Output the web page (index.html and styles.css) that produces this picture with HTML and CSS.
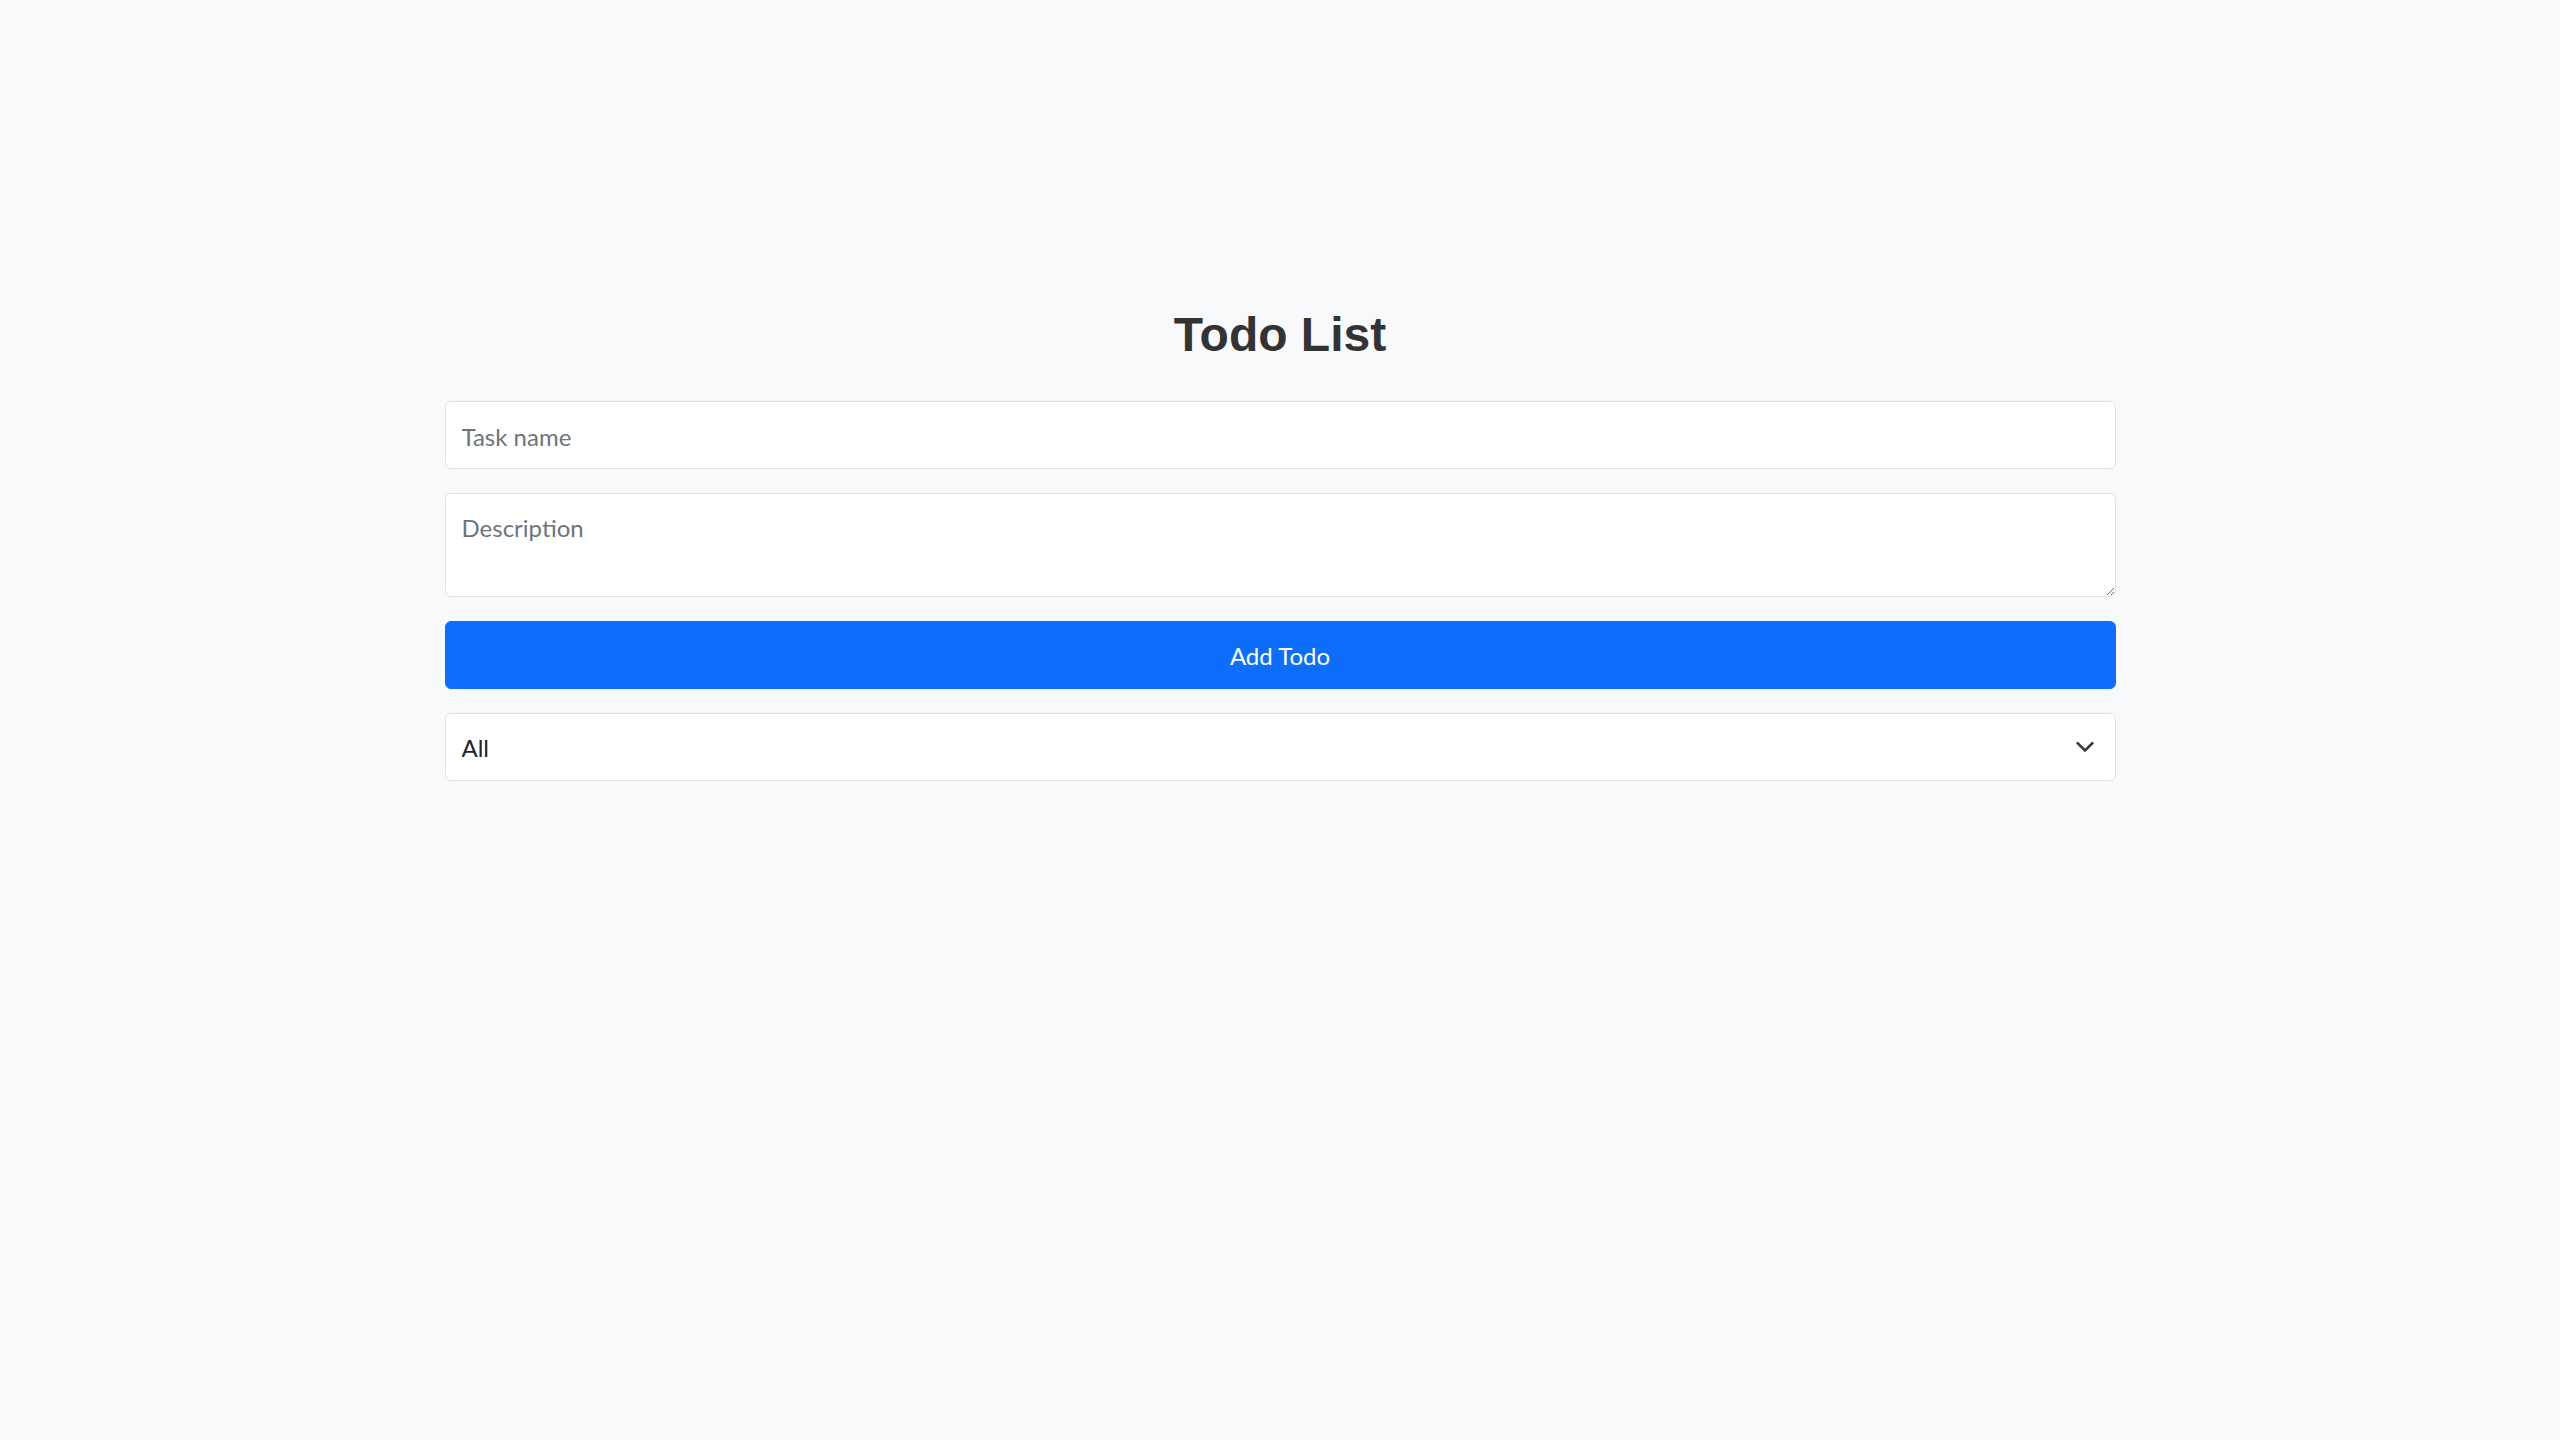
FILE: index.html
```html
<!DOCTYPE html>
<html lang="en">
<head>
<meta charset="utf-8">
<title>Todo List</title>
<link rel="stylesheet" href="styles.css">
</head>
<body>
<main class="app">
  <h1 class="title">Todo List</h1>
  <form class="todo-form">
    <input class="field" type="text" placeholder="Task name">
    <textarea class="field field-area" placeholder="Description"></textarea>
    <button class="btn-add" type="button">Add Todo</button>
    <div class="select-wrap">
      <select class="field field-select">
        <option>All</option>
        <option>Completed</option>
        <option>Pending</option>
      </select>
      <svg class="chevron" width="18" height="11" viewBox="0 0 18 11" aria-hidden="true">
        <path d="M1.6 1.6 L9 9 L16.4 1.6" fill="none" stroke="#343a40" stroke-width="2.6" stroke-linecap="round" stroke-linejoin="round"/>
      </svg>
    </div>
  </form>
</main>
</body>
</html>
```

FILE: styles.css
```css
html, body {
  margin: 0;
  padding: 0;
  background: #f8f9fa;
}

body {
  font-family: Lato, "Noto Sans", sans-serif;
  color: #212529;
}

.app {
  width: 1671px;
  margin: 0 auto;
  padding-top: 305px;
}

.title {
  margin: 0 0 36px;
  text-align: center;
  font-family: "Liberation Sans", Arial, sans-serif;
  font-weight: 700;
  font-size: 48px;
  line-height: 60px;
  color: #333333;
}

.todo-form {
  display: flex;
  flex-direction: column;
  gap: 24px;
}

.field {
  box-sizing: border-box;
  width: 100%;
  height: 68px;
  margin: 0;
  padding: 16px 16px 14px;
  font-family: Lato, "Noto Sans", sans-serif;
  font-size: 24px;
  line-height: 36px;
  color: #212529;
  background: #ffffff;
  border: 1px solid #dee2e6;
  border-radius: 6px;
  outline: none;
}

.field::placeholder {
  color: #6c757d;
  opacity: 1;
}

.field-area {
  display: block;
  height: 104px;
  resize: vertical;
}

.btn-add {
  box-sizing: border-box;
  height: 68px;
  width: 100%;
  margin: 0;
  padding: 16px 16px 14px;
  font-family: Lato, "Noto Sans", sans-serif;
  font-size: 24px;
  line-height: 36px;
  color: #ffffff;
  background: #0d6efd;
  border: 1px solid #0d6efd;
  border-radius: 6px;
  cursor: pointer;
}

.select-wrap {
  position: relative;
}

.field-select {
  display: block;
  -webkit-appearance: none;
  appearance: none;
  padding-right: 60px;
}

.chevron {
  position: absolute;
  right: 22px;
  top: 50%;
  transform: translateY(-50%);
  pointer-events: none;
}
```
